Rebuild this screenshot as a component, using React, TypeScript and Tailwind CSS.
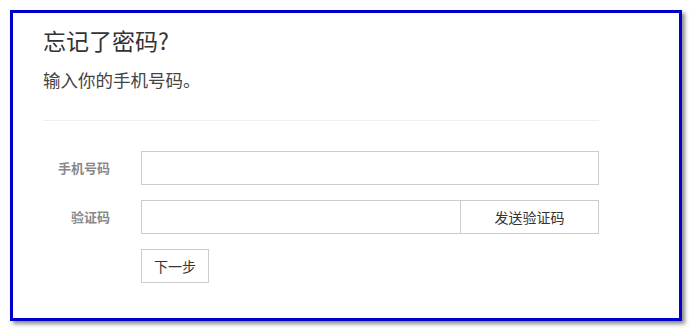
import React from 'react';

const font = { fontFamily: '"Noto Sans CJK SC", "Noto Sans", sans-serif' };

function App() {
  return (
    <div className="w-[693px] h-[332px] bg-white pt-[10px] pl-[10px]" style={font}>
      <div className="w-[672px] h-[311px] border-[3px] border-[#0000cc] bg-white shadow-[3px_3px_4px_rgba(0,0,0,0.45)] pt-[12px] pl-[30px]">
        {/* Header */}
        <h1 className="text-[23px] leading-[30px] text-[#333] font-normal">忘记了密码?</h1>
        <p className="mt-[13px] text-[17.5px] leading-[24px] text-[#444]">输入你的手机号码。</p>
        <div className="mt-[28px] w-[556px] h-px bg-[#eee]" />

        {/* Form */}
        <div className="mt-[30px] flex flex-col gap-[15px]">
          <div className="flex items-center">
            <label className="w-[98px] pr-[31px] text-right text-[13px] font-bold text-[#888]">手机号码</label>
            <input className="w-[458px] h-[34px] border border-[#ccc] outline-none px-2 text-sm" />
          </div>
          <div className="flex items-center">
            <label className="w-[98px] pr-[31px] text-right text-[13px] font-bold text-[#888]">验证码</label>
            <input className="w-[320px] h-[34px] border border-[#ccc] outline-none px-2 text-sm" />
            <button className="w-[138px] h-[34px] border border-l-0 border-[#ccc] bg-white text-[14px] text-[#333]">
              发送验证码
            </button>
          </div>
          <div className="flex items-center pl-[98px]">
            <button className="w-[68px] h-[34px] border border-[#ccc] bg-white text-[14px] text-[#333]">
              下一步
            </button>
          </div>
        </div>
      </div>
    </div>
  );
}

export default App;
